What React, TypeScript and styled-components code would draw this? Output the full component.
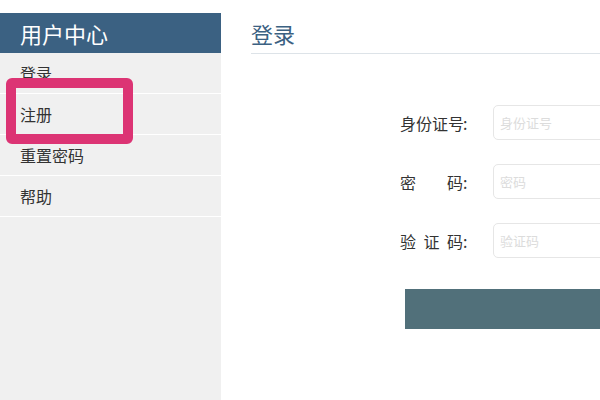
import styled, { createGlobalStyle } from "styled-components";

const GlobalStyle = createGlobalStyle`
  html, body {
    margin: 0;
    padding: 0;
    background: #fff;
  }
  body {
    font-family: "Noto Sans CJK SC", "Microsoft YaHei", sans-serif;
  }
`;

const Page = styled.div`
  display: flex;
  padding-top: 13px;
  min-height: 387px;
  width: 100vw;
  overflow: hidden;
`;

const Sidebar = styled.aside`
  position: relative;
  width: 221px;
  flex-shrink: 0;
  background: #f0f0f0;
  min-height: 387px;
`;

const SideHeader = styled.div`
  height: 40px;
  background: #3b6182;
  color: #fff;
  font-size: 22px;
  line-height: 40px;
  padding-left: 20px;
`;

const SideItem = styled.div`
  height: 40px;
  line-height: 40px;
  padding-left: 20px;
  font-size: 16px;
  color: #333;
  border-bottom: 1px solid #fff;
`;

const Highlight = styled.div`
  position: absolute;
  left: 6px;
  top: 65px;
  width: 107px;
  height: 46px;
  border: 10px solid #dc3474;
  border-radius: 6px;
`;

const Main = styled.main`
  flex: 1;
  min-width: 0;
  padding-left: 30px;
`;

const Title = styled.h1`
  margin: 0;
  height: 40px;
  line-height: 40px;
  font-size: 22px;
  font-weight: normal;
  color: #3b6182;
  border-bottom: 1px solid #dde3e8;
`;

const Form = styled.form`
  display: flex;
  flex-direction: column;
  gap: 24px;
  margin: 51px 0 0 149px;
  width: 400px;
`;

const Row = styled.div`
  display: flex;
  align-items: center;
  height: 35px;
`;

const Label = styled.label`
  display: flex;
  align-items: center;
  width: 93px;
  flex-shrink: 0;
  font-size: 16px;
  color: #333;
`;

const Justify = styled.span`
  display: flex;
  justify-content: space-between;
  width: 63px;
`;

const Input = styled.input`
  box-sizing: border-box;
  width: 240px;
  height: 35px;
  border: 1px solid #e6e6e6;
  border-radius: 5px;
  padding: 0 6px;
  font-family: inherit;
  font-size: 13px;
  outline: none;

  &::placeholder {
    color: #dcdcdc;
  }
`;

const Submit = styled.button`
  margin: 7px 0 0 5px;
  width: 300px;
  height: 40px;
  border: none;
  background: #51707a;
`;

const fields = [
  { label: ["身", "份", "证", "号"], placeholder: "身份证号" },
  { label: ["密", "码"], placeholder: "密码" },
  { label: ["验", "证", "码"], placeholder: "验证码" },
];

export default function App() {
  return (
    <>
      <GlobalStyle />
      <Page>
        <Sidebar>
          <SideHeader>用户中心</SideHeader>
          <SideItem>登录</SideItem>
          <SideItem>注册</SideItem>
          <SideItem>重置密码</SideItem>
          <SideItem>帮助</SideItem>
          <Highlight />
        </Sidebar>
        <Main>
          <Title>登录</Title>
          <Form>
            {fields.map((f) => (
              <Row key={f.placeholder}>
                <Label>
                  <Justify>
                    {f.label.map((c, i) => (
                      <span key={i}>{c}</span>
                    ))}
                  </Justify>
                  :
                </Label>
                <Input placeholder={f.placeholder} />
              </Row>
            ))}
            <Submit type="button" />
          </Form>
        </Main>
      </Page>
    </>
  );
}
